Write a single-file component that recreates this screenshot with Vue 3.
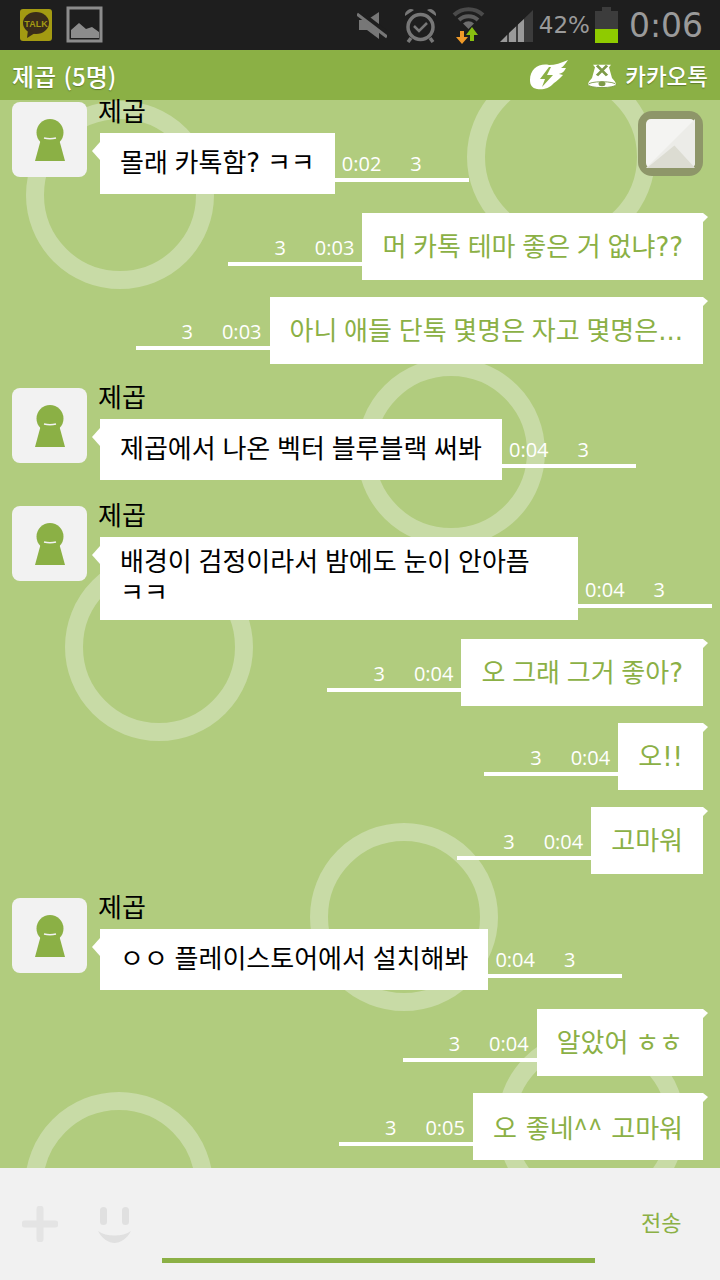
<script setup>
const circles = [
  { id: 1, x: 26, y: 1 },
  { id: 2, x: 467, y: -37 },
  { id: 3, x: 357, y: 258 },
  { id: 4, x: 65, y: 453 },
  { id: 5, x: 310, y: 723 },
  { id: 6, x: 497, y: 930 },
  { id: 7, x: 25, y: 992 },
];

const messages = [
  { id: 1, mine: false, text: "몰래 카톡함? ㅋㅋ", time: "0:02" },
  { id: 2, mine: true, text: "머 카톡 테마 좋은 거 없냐??", time: "0:03" },
  { id: 3, mine: true, text: "아니 애들 단톡 몇명은 자고 몇명은...", time: "0:03" },
  { id: 4, mine: false, text: "제곱에서 나온 벡터 블루블랙 써봐", time: "0:04" },
  { id: 5, mine: false, text: "배경이 검정이라서 밤에도 눈이 안아픔\nㅋㅋ", time: "0:04", wide: true },
  { id: 6, mine: true, text: "오 그래 그거 좋아?", time: "0:04" },
  { id: 7, mine: true, text: "오!!", time: "0:04" },
  { id: 8, mine: true, text: "고마워", time: "0:04" },
  { id: 9, mine: false, text: "ㅇㅇ 플레이스토어에서 설치해봐", time: "0:04" },
  { id: 10, mine: true, text: "알았어 ㅎㅎ", time: "0:04" },
  { id: 11, mine: true, text: "오 좋네^^ 고마워", time: "0:05", narrow: true },
];
</script>

<template>
  <div class="phone">
    <div class="status-bar">
      <svg class="ic-talk" width="34" height="34" viewBox="0 0 34 34">
        <rect x="1" y="1" width="32" height="32" rx="3" fill="#a39a12" />
        <ellipse cx="17" cy="15" rx="13" ry="11" fill="#3a2c1a" />
        <path d="M9 22 L8 30 L16 25 Z" fill="#3a2c1a" />
        <text x="17" y="19" text-anchor="middle" class="talk-text">TALK</text>
      </svg>
      <svg class="ic-pic" width="38" height="38" viewBox="0 0 38 38">
        <rect x="2" y="2" width="33" height="33" fill="none" stroke="#8c8c8c" stroke-width="3" />
        <path d="M5 32 V24 L13 17 L20 23 L26 21 L33 26 V32 Z" fill="#8c8c8c" />
      </svg>
      <div class="status-right">
        <svg class="ic-mute" width="30" height="30" viewBox="0 0 30 30">
          <path d="M2 10 H10 L22 2 V29 L10 20 H2 Z" fill="#777" />
          <path d="M0 1 L30 24" stroke="#1e1e1e" stroke-width="6" />
          <path d="M0 4 L30 27" stroke="#777" stroke-width="3" />
        </svg>
        <svg class="ic-alarm" width="33" height="36" viewBox="0 0 33 36">
          <circle cx="16.500" cy="20" r="12.500" fill="none" stroke="#777" stroke-width="3.500" />
          <path d="M1 9 A6 6 0 0 1 10 3 Z M32 9 A6 6 0 0 0 23 3 Z" fill="#777" />
          <path d="M10 19 L15 24 L23 16" fill="none" stroke="#777" stroke-width="2.500" />
          <path d="M7 31 L4 35 M26 31 L29 35" stroke="#777" stroke-width="3.500" />
        </svg>
        <svg class="ic-wifi" width="34" height="38" viewBox="0 0 34 38">
          <path d="M2 9 A21 21 0 0 1 31 9" fill="none" stroke="#4a4a4a" stroke-width="4" />
          <path d="M7 14 A14 14 0 0 1 26 14" fill="none" stroke="#5c5c5c" stroke-width="4" />
          <path d="M11 17.500 A8 8 0 0 1 22 17.500 L16.500 23 Z" fill="#6e6e6e" />
          <path d="M8 25 H12 V31 H16 L10 38 L4 31 H8 Z" fill="#f09a28" />
          <path d="M20 21 L26 29 H22 V35 H18 V29 H14 Z" fill="#88c010" />
        </svg>
        <svg class="ic-signal" width="33" height="32" viewBox="0 0 33 32">
          <path d="M0 32 L33 0 V32 Z" fill="#3c3c3c" />
          <path d="M0 32 L7 25 V32 Z M9 23 L16 16.500 V32 H9 Z M18 14.500 L24 9 V32 H18 Z" fill="#9a9a9a" />
        </svg>
        <span class="battery-text">42%</span>
        <div class="battery">
          <div class="battery-cap"></div>
          <div class="battery-body"><div class="battery-fill"></div></div>
        </div>
        <span class="clock">0:06</span>
      </div>
    </div>

    <div class="header">
      <span class="title">제곱 (5명)</span>
      <div class="header-right">
        <svg width="40" height="32" viewBox="0 0 40 32">
          <path d="M1 21 C1 10 10 4 20 6 C26 6 32 4 39 1 C36 5 35 7 32 9 L37 9 C35 13 33 14 30 15 L34 16 C30 20 28 22 25 24 C20 30 13 31 8 30 C3 29 1 26 1 21 Z" fill="#fff" />
          <path d="M20 8 L11 20 L16 20 L13 28 L24 16 L18 16 L22 8 Z" fill="#8bb045" />
        </svg>
        <svg class="ic-bell" width="30" height="25" viewBox="0 0 30 30" preserveAspectRatio="none">
          <path d="M6 2 H24 L22 5 L25 18 C27 21 29 23 29 26 H1 C1 23 3 21 5 18 L8 5 Z" fill="#fff" />
          <path d="M10 3 L20 15 M20 3 L10 15" stroke="#7d9a48" stroke-width="3" />
          <ellipse cx="15" cy="26" rx="14" ry="3.500" fill="#fff" stroke="#7d9a48" stroke-width="1" />
          <ellipse cx="15" cy="25" rx="3.500" ry="3" fill="#7d9a48" />
        </svg>
        <span class="brand">카카오톡</span>
      </div>
    </div>

    <div class="chat">
      <div class="rings">
        <div
          v-for="c in circles"
          :key="c.id"
          class="ring"
          :style="{ left: c.x + 'px', top: c.y + 'px' }"
        ></div>
      </div>

      <div class="scroll-btn">
        <svg width="49" height="49" viewBox="0 0 50 50">
          <rect width="50" height="50" rx="5" fill="#f4f4f2" />
          <path d="M50 0 V45 A5 5 0 0 1 45 50 H0 Z" fill="#ecece8" />
          <path d="M1 50 L29 27 L50 50 Z" fill="#dcdcd2" />
        </svg>
      </div>

      <div class="messages">
        <template v-for="m in messages" :key="m.id">
          <div v-if="m.mine" class="row out">
            <div class="meta">
              <span>3</span>
              <span>{{ m.time }}</span>
            </div>
            <div :class="['bubble', 'mine', { narrow: m.narrow }]">{{ m.text }}</div>
          </div>
          <div v-else class="row in">
            <div class="avatar">
              <svg width="32" height="42" viewBox="0 0 32 42">
                <circle cx="16" cy="13.500" r="13.500" fill="#8bb045" />
                <path d="M7 20 H25 L31 42 H1 Z" fill="#8bb045" />
                <path d="M10 19 Q16 20.500 22 19" stroke="#f2f2f2" stroke-width="1.600" fill="none" />
              </svg>
            </div>
            <div class="in-body">
              <div class="name">제곱</div>
              <div class="in-line">
                <div :class="['bubble', 'theirs', { wide: m.wide }]">{{ m.text }}</div>
                <div class="meta">
                  <span>{{ m.time }}</span>
                  <span>3</span>
                </div>
              </div>
            </div>
          </div>
        </template>
      </div>
    </div>

    <div class="input-bar">
      <svg class="ic-plus" width="36" height="36" viewBox="0 0 36 36">
        <path d="M18 3 V33 M3 18 H33" stroke="#e4e4e4" stroke-width="7" stroke-linecap="round" />
      </svg>
      <svg class="ic-smile" width="34" height="36" viewBox="0 0 34 36">
        <rect x="2" y="0" width="7" height="18" rx="3.500" fill="#e0e0e0" />
        <rect x="24" y="0" width="7" height="18" rx="3.500" fill="#e0e0e0" />
        <path d="M0 24 C8 30 25 30 33 24 C29 32 22 36 16.500 36 C11 36 4 32 0 24 Z" fill="#e0e0e0" />
      </svg>
      <div class="input-line"></div>
      <span class="send">전송</span>
    </div>
  </div>
</template>

<style scoped>
.phone {
  width: 720px;
  height: 1280px;
  display: flex;
  flex-direction: column;
  overflow: hidden;
  font-family: "Noto Sans CJK KR", "Open Sans", sans-serif;
}

.status-bar {
  height: 50px;
  background-color: #1e1e1e;
  display: flex;
  align-items: center;
  flex-shrink: 0;
}

.ic-talk {
  margin-left: 19px;
}

.ic-pic {
  margin-left: 13px;
}

.talk-text {
  font-family: "Liberation Sans", sans-serif;
  font-size: 9px;
  font-weight: bold;
  fill: #a39a12;
}

.status-right {
  margin-left: auto;
  display: flex;
  align-items: center;
  padding-right: 17px;
  height: 50px;
}

.ic-mute {
  margin-right: 17px;
}

.ic-alarm {
  margin-right: 15px;
}

.ic-wifi {
  margin-right: 14px;
}

.ic-signal {
  margin-right: 6px;
  margin-top: 2px;
}

.battery-text {
  font-family: "DejaVu Sans", sans-serif;
  font-size: 23px;
  color: #9a9a9a;
  margin-right: 5px;
}

.battery {
  width: 23px;
  height: 36px;
  display: flex;
  flex-direction: column;
  align-items: center;
  margin-right: 11px;
}

.battery-cap {
  width: 9px;
  height: 4px;
  background-color: #3c3c3c;
}

.battery-body {
  width: 23px;
  flex: 1;
  background-color: #3c3c3c;
  display: flex;
  align-items: flex-end;
}

.battery-fill {
  width: 100%;
  height: 14px;
  background-color: #8fcb00;
}

.clock {
  font-family: "DejaVu Sans", sans-serif;
  font-size: 33px;
  color: #9a9a9a;
}

.header {
  height: 50px;
  background-color: #8bb045;
  display: flex;
  align-items: center;
  padding: 0 12px;
  flex-shrink: 0;
}

.title {
  font-size: 24px;
  font-weight: 500;
  word-spacing: 2px;
  color: #fff;
  text-shadow: 0 1px 1px #5f7d2c;
}

.header-right {
  margin-left: auto;
  display: flex;
  align-items: center;
}

.ic-bell {
  margin-left: 18px;
  margin-right: 8px;
}

.brand {
  font-size: 22.500px;
  font-weight: 500;
  color: #fff;
  text-shadow: 0 1px 1px #5f7d2c;
}

.chat {
  position: relative;
  height: 1068px;
  flex-shrink: 0;
  background-color: #b1cc7e;
}

.rings {
  position: absolute;
  left: 0;
  top: 0;
  right: 0;
  bottom: 0;
  overflow: hidden;
}

.ring {
  position: absolute;
  width: 188px;
  height: 188px;
  box-sizing: border-box;
  border: 18px solid #c8dba6;
  border-radius: 50%;
}

.scroll-btn {
  position: absolute;
  right: 17px;
  top: 11px;
  width: 49px;
  height: 49px;
  padding: 8px;
  border-radius: 14px;
  background-color: #8e9669;
  z-index: 2;
}

.messages {
  position: relative;
  display: flex;
  flex-direction: column;
}

.row {
  display: flex;
}

.out {
  justify-content: flex-end;
  padding-right: 17px;
  margin-top: 17px;
}

.in {
  padding-left: 12px;
  margin-top: 24px;
}

.in:first-child {
  margin-top: 2px;
}

.in + .in {
  margin-top: 26px;
}

.in + .out {
  margin-top: 19px;
}

.avatar {
  width: 75px;
  height: 75px;
  border-radius: 8px;
  background-color: #f2f2f2;
  display: flex;
  align-items: center;
  justify-content: center;
  flex-shrink: 0;
}

.in-body {
  margin-left: 13px;
  display: flex;
  flex-direction: column;
}

.name {
  height: 35px;
  margin-top: -4px;
  margin-left: -2px;
  font-size: 26px;
  line-height: 24px;
  color: #000;
}

.in-line {
  display: flex;
}

.bubble {
  position: relative;
  box-sizing: border-box;
  background-color: #fff;
  font-family: "DejaVu Sans", "Noto Sans CJK KR", sans-serif;
  font-size: 26px;
  word-spacing: -1.500px;
  line-height: 32px;
  white-space: pre-line;
  flex-shrink: 0;
}

.theirs {
  color: #000;
  height: 61px;
  padding: 14px 20px 0;
}

.theirs::before {
  content: "";
  position: absolute;
  left: -8px;
  top: 9px;
  border-top: 9px solid transparent;
  border-bottom: 9px solid transparent;
  border-right: 8px solid #fff;
}

.theirs.wide {
  width: 478px;
  height: 83px;
  padding: 10px 20px 0;
  line-height: 31px;
}

.mine {
  color: #8bb045;
  height: 67px;
  padding: 18px 20px 0;
}

.mine.narrow {
  font-family: "Noto Sans CJK KR", sans-serif;
  word-spacing: 3px;
}

.mine::after {
  content: "";
  position: absolute;
  left: 100%;
  top: 0;
  border-left: 5px solid #fff;
  border-top: 4px solid transparent;
  border-bottom: 5px solid transparent;
}

.meta {
  width: 134px;
  box-sizing: border-box;
  flex-shrink: 0;
  align-self: flex-end;
  border-bottom: 4px solid #fff;
  display: flex;
  justify-content: space-between;
  font-family: "Open Sans", sans-serif;
  font-size: 20px;
  line-height: 24px;
  color: #fff;
  padding: 0 47px 2px 7px;
  margin-bottom: 12px;
}

.out .meta {
  padding: 0 8px 2px 46px;
  margin-bottom: 14px;
}

.input-bar {
  flex: 1;
  position: relative;
  background-color: #f1f1f1;
  display: flex;
  align-items: flex-start;
}

.ic-plus {
  margin: 38px 0 0 22px;
}

.ic-smile {
  margin: 39px 0 0 40px;
}

.input-line {
  width: 433px;
  height: 5px;
  margin: 90px 0 0 30px;
  background-color: #8bb045;
}

.send {
  margin: 37px 0 0 46px;
  font-size: 22px;
  color: #8bb045;
}
</style>
